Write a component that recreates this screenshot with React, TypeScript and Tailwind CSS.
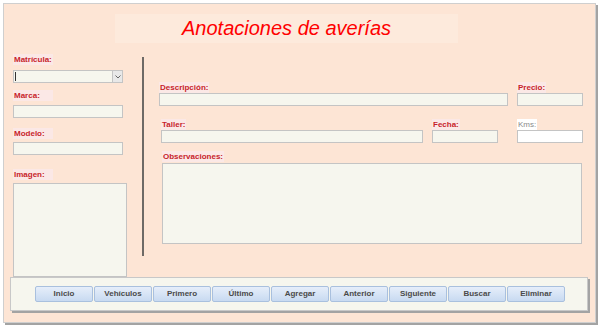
import React from 'react';

const font = { fontFamily: '"Liberation Sans", Arial, sans-serif' };

function Label({ text, muted, className = '' }: { text: string; muted?: boolean; className?: string }) {
  return (
    <div
      className={`h-[11px] px-[1px] text-[8px] leading-[11px] font-bold ${
        muted ? 'bg-white text-[#8a8a8a] font-normal' : 'bg-[#fbe8e6] text-[#c81e2b]'
      } ${className}`}
    >
      {text}
    </div>
  );
}

function Field({ className = '', white }: { className?: string; white?: boolean }) {
  return (
    <div
      className={`h-[13px] border border-[#c4c4c4] ${white ? 'bg-white' : 'bg-[#f6f6ee]'} ${className}`}
    />
  );
}

const buttons = ['Inicio', 'Vehículos', 'Primero', 'Último', 'Agregar', 'Anterior', 'Siguiente', 'Buscar', 'Eliminar'];

export default function App() {
  return (
    <div className="w-[600px] h-[329px] bg-white pt-[3px] pl-[3px]" style={font}>
      <div className="w-[593px] h-[320px] bg-[#fde5d5] border border-[#cfcfcf] shadow-[2px_2px_0_#a3a3a3] flex flex-col">
        {/* Title */}
        <div className="mt-[10px] ml-[111px] w-[343px] h-[29px] bg-[#fdeadc] pl-[67px]">
          <span className="text-[20px] leading-[29px] italic text-[#ff0000]">Anotaciones de averías</span>
        </div>

        {/* Body */}
        <div className="mt-[11px] flex h-[223px]">
          {/* Left column */}
          <div className="ml-[9px] w-[114px] flex flex-col items-start">
            <Label text="Matrícula:" className="w-[40px]" />
            <div className="mt-[5px] w-[110px] h-[13px] border border-[#c4c4c4] bg-[#f6f6ee] flex">
              <div className="ml-[1px] mt-[1px] w-[1px] h-[9px] bg-[#333]" />
              <div className="ml-auto w-[10px] h-full bg-[#e8e8e8] border-l border-[#c4c4c4] flex items-center justify-center">
                <svg width="6" height="4" viewBox="0 0 6 4">
                  <path d="M0.5 0.5 L3 3 L5.5 0.5" stroke="#666" strokeWidth="1" fill="none" />
                </svg>
              </div>
            </div>
            <Label text="Marca:" className="mt-[7px] w-[40px]" />
            <Field className="mt-[4px] w-[110px]" />
            <Label text="Modelo:" className="mt-[10px] w-[40px]" />
            <Field className="mt-[3px] w-[110px]" />
            <Label text="Imagen:" className="mt-[14px] w-[40px]" />
            <div className="mt-[3px] w-[114px] h-[94px] border border-[#c4c4c4] bg-[#f6f6ee]" />
          </div>

          {/* Divider */}
          <div className="ml-[15px] mt-[3px] w-[2px] h-[199px] bg-[#6e6a66]" />

          {/* Right area */}
          <div className="flex flex-col">
            <div className="mt-[28px] flex">
              <div className="ml-[15px] flex flex-col items-start">
                <Label text="Descripción:" />
                <Field className="w-[349px]" />
              </div>
              <div className="ml-[9px] flex flex-col items-start">
                <Label text="Precio:" />
                <Field className="w-[66px]" />
              </div>
            </div>
            <div className="mt-[13px] flex">
              <div className="ml-[17px] flex flex-col items-start">
                <Label text="Taller:" />
                <Field className="w-[262px]" />
              </div>
              <div className="ml-[9px] flex flex-col items-start">
                <Label text="Fecha:" />
                <Field className="w-[66px]" />
              </div>
              <div className="ml-[19px] flex flex-col items-start">
                <Label text="Kms:" muted />
                <Field className="w-[66px]" white />
              </div>
            </div>
            <div className="mt-[8px] ml-[18px] flex flex-col items-start">
              <Label text="Observaciones:" />
              <div className="mt-[1px] w-[420px] h-[81px] border border-[#c4c4c4] bg-[#f6f6ee]" />
            </div>
          </div>
        </div>

        {/* Footer */}
        <div className="ml-[6px] w-[578px] h-[34px] bg-[#f6f6ee] border border-[#c8c8c8] shadow-[2px_2px_0_#a3a3a3] flex items-center pl-[24px]">
          {buttons.map((b) => (
            <button
              key={b}
              className="w-[58px] h-[16px] mr-[1px] rounded-[2px] border border-[#a9c0de] bg-gradient-to-b from-[#e6eefa] to-[#c8daf1] text-[8px] font-bold text-[#4a4a4a] leading-[14px]"
            >
              {b}
            </button>
          ))}
        </div>
      </div>
    </div>
  );
}
